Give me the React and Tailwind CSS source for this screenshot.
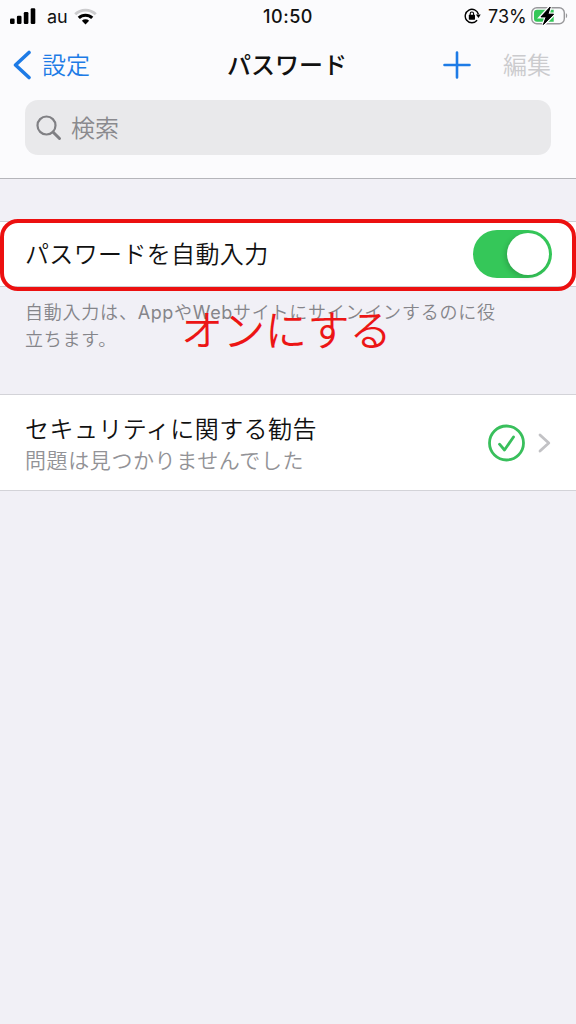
import { useState } from "react";

function SignalIcon() {
  return (
    <svg width="26" height="17" viewBox="0 0 26 17" fill="#000">
      <rect x="0" y="10.5" width="4.6" height="5.5" rx="1.2" />
      <rect x="6.9" y="7.7" width="4.6" height="8.3" rx="1.2" />
      <rect x="13.8" y="4" width="4.6" height="12" rx="1.2" />
      <rect x="20.7" y="0.3" width="4.6" height="15.7" rx="1.2" />
    </svg>
  );
}

function WifiIcon() {
  return (
    <svg width="23" height="17" viewBox="0 0 24 17" fill="none">
      <path d="M1.3 6.2a15.2 15.2 0 0 1 21.4 0" stroke="#ccccce" strokeWidth="3" />
      <path d="M5 10a10 10 0 0 1 14 0" stroke="#000" strokeWidth="3.2" />
      <path d="M8.2 13a5.5 5.5 0 0 1 7.6 0L12 16.8z" fill="#000" />
    </svg>
  );
}

function RotationLockIcon() {
  return (
    <svg width="17" height="16" viewBox="0 0 17 16" fill="none" stroke="#000">
      <path d="M13.1 12.3A6.7 6.7 0 1 1 14.4 6.3" strokeWidth="1.4" />
      <path d="M11.9 6.5h4.8l-2.2 3.5z" fill="#000" stroke="none" />
      <rect x="4.8" y="6.8" width="6.2" height="4.9" rx="0.6" fill="#000" stroke="none" />
      <path d="M6.2 7.2V5.7a1.7 1.7 0 0 1 3.4 0v1.5" strokeWidth="1.1" />
    </svg>
  );
}

function BatteryIcon() {
  return (
    <svg width="37" height="22" viewBox="0 0 37 22">
      <rect x="0.8" y="2.7" width="32.5" height="16" rx="5" fill="none" stroke="#98989b" strokeWidth="1.4" />
      <path d="M34.9 8.2c1.7.6 1.7 4.2 0 4.8z" fill="#98989b" />
      <path d="M6 4.7h16.7v12H6a3 3 0 0 1-3-3V7.7a3 3 0 0 1 3-3z" fill="#35c759" />
      <path d="M19.2 2 10 11.9h5.2l-2.8 7.6L22.6 9.2h-5.7z" fill="#000" stroke="#fbfbfd" strokeWidth="3.4" paintOrder="stroke" />
      <path d="M19.2 2 10 11.9h5.2l-2.8 7.6L22.6 9.2h-5.7z" fill="#000" stroke="#000" strokeWidth="1" strokeLinejoin="round" />
    </svg>
  );
}

function StatusBar() {
  return (
    <div className="relative flex h-8 items-center justify-between pl-[10px] pr-[8px] font-[Inter,sans-serif] text-[18px] text-[#111]">
      <div className="flex items-center">
        <SignalIcon />
        <span className="ml-[11px] mr-[6px] w-[21px]">au</span>
        <WifiIcon />
      </div>
      <span className="absolute left-1/2 -translate-x-1/2 font-medium tracking-[0.5px]">10:50</span>
      <div className="flex items-center">
        <RotationLockIcon />
        <span className="ml-[7px] mr-[4px] w-[39px] whitespace-nowrap">73%</span>
        <BatteryIcon />
      </div>
    </div>
  );
}

function NavBar() {
  return (
    <div className="grid h-[66px] grid-cols-[1fr_auto_1fr] items-center pl-[13px] pr-[25px] text-[24px] leading-none">
      <button className="flex items-center text-[#1d7be6]">
        <svg width="19" height="30" viewBox="0 0 19 30" fill="none">
          <path d="M16 2.5 2.5 15 16 27.5" stroke="currentColor" strokeWidth="3.6" strokeLinecap="round" strokeLinejoin="round" />
        </svg>
        <span className="ml-[10px] pb-[2px] font-[350]">設定</span>
      </button>
      <h1 className="pb-[2px] pl-[10px] text-center font-medium whitespace-nowrap">パスワード</h1>
      <div className="flex items-center justify-end">
        <svg width="28" height="28" viewBox="0 0 28 28" fill="none">
          <path d="M14 1.5v25M1.5 14h25" stroke="#1d7be6" strokeWidth="2.6" strokeLinecap="round" />
        </svg>
        <span className="ml-[32px] pb-[2px] font-[350] text-[#cbcbce]">編集</span>
      </div>
    </div>
  );
}

function SearchField() {
  return (
    <div className="mx-[25px] mt-[2px] flex h-[55px] items-center rounded-[13px] bg-[#e9e9eb] pl-[11px] text-[24px] font-[350] text-[#8a8a8e]">
      <svg width="26" height="26" viewBox="0 0 26 26" fill="none" stroke="#808084">
        <circle cx="10.5" cy="10.5" r="9" strokeWidth="2.2" />
        <path d="M17.2 17.2 23.5 23.5" strokeWidth="3" strokeLinecap="round" />
      </svg>
      <span className="ml-[9px] pb-[2px]">検索</span>
    </div>
  );
}

function Toggle({ checked, onChange }) {
  return (
    <button
      role="switch"
      aria-checked={checked}
      onClick={() => onChange(!checked)}
      className={`flex h-12 w-[79px] items-center rounded-full p-[3px] ${checked ? "justify-end bg-[#35c759]" : "justify-start bg-[#e9e9eb]"}`}
    >
      <span className="h-[42px] w-[42px] rounded-full bg-white shadow-[-2px_2px_5px_rgba(0,0,0,0.16)]" />
    </button>
  );
}

export default function App() {
  const [autoFill, setAutoFill] = useState(true);

  return (
    <div className="h-[1024px] w-[576px] overflow-hidden bg-[#f1f0f6] font-['Noto_Sans_CJK_JP',sans-serif] text-[#111]">
      <header className="h-[179px] border-b border-[#b5b5ba] bg-[#fbfbfd]">
        <StatusBar />
        <NavBar />
        <SearchField />
      </header>

      <main className="pt-[42px]">
        <section className="relative">
          <div className="flex h-[66px] items-center justify-between border-y border-[#cfcfd4] bg-white pl-[25px] pr-[24px]">
            <span className="pb-[2px] text-[24px] font-[350] tracking-[0.35px]">パスワードを自動入力</span>
            <Toggle checked={autoFill} onChange={setAutoFill} />
          </div>
          <p className="mt-[12px] pl-[25px] font-[Inter,'Noto_Sans_CJK_JP',sans-serif] text-[18px] leading-[27px] font-[350] tracking-[0.78px] whitespace-nowrap text-[#85858a]">
            自動入力は、<span className="font-normal tracking-[0.6px]">App</span>や<span className="font-normal tracking-[0.6px]">Web</span>サイトにサインインするのに役
            <br />
            立ちます。
          </p>

          {/* 注釈 */}
          <div className="pointer-events-none absolute -top-[2px] left-0 h-[72px] w-[576px] rounded-[18px] border-4 border-[#ec1010]" />
          <span className="pointer-events-none absolute left-[181px] top-[77px] text-[42px] leading-[60px] font-[350] whitespace-nowrap text-[#ec1515]">オンにする</span>
        </section>

        <section className="mt-[41px] flex h-[97px] items-center justify-between border-y border-[#d3d3d8] bg-white pl-[25px] pr-[25px]">
          <div>
            <p className="text-[24px] leading-[33px] font-[350] tracking-[0.45px]">セキュリティに関する勧告</p>
            <p className="text-[21px] leading-[31px] font-[350] tracking-[0.6px] text-[#929296]">問題は見つかりませんでした</p>
          </div>
          <div className="flex items-center">
            <svg width="38" height="38" viewBox="0 0 38 38" fill="none" stroke="#39bf5c" strokeLinecap="round" strokeLinejoin="round">
              <circle cx="19.5" cy="19" r="17" strokeWidth="2.8" />
              <path d="M12.5 20.2 17.5 26 26.5 13" strokeWidth="2.8" />
            </svg>
            <svg className="ml-[13px]" width="13" height="20" viewBox="0 0 13 20" fill="none">
              <path d="M2 2l8.8 8L2 18" stroke="#c2c2c5" strokeWidth="2.8" strokeLinecap="round" strokeLinejoin="round" />
            </svg>
          </div>
        </section>
      </main>
    </div>
  );
}
